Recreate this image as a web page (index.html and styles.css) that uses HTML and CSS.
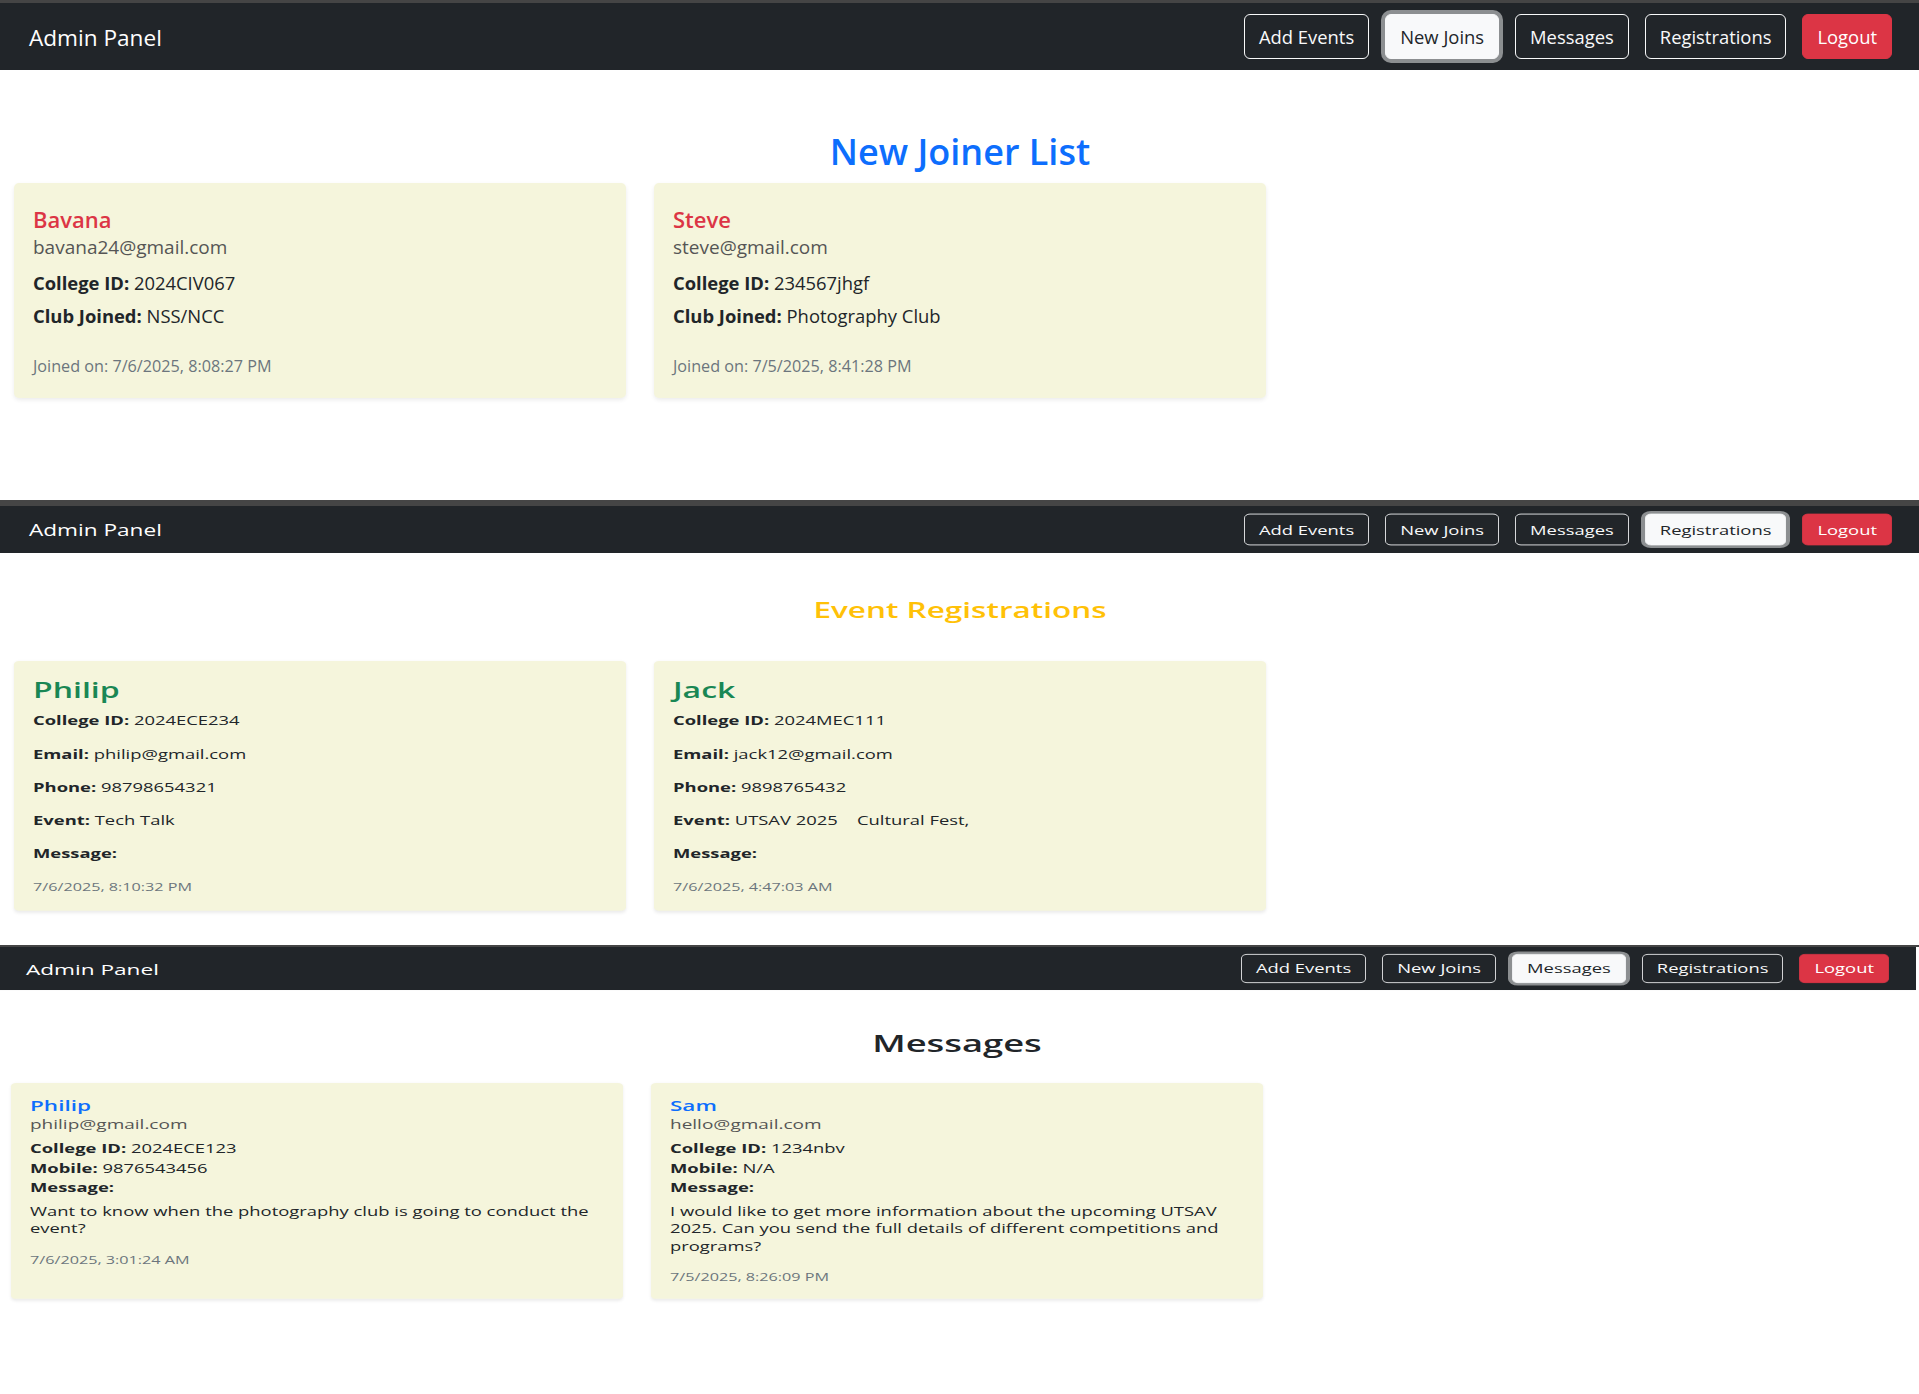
FILE: index.html
```html
<!DOCTYPE html>
<html lang="en">
<head>
<meta charset="utf-8">
<title>Admin Panel</title>
<link rel="stylesheet" href="styles.css">
</head>
<body>

<section class="shot shot-joins">
  <div class="screen">
    <nav class="navbar">
      <span class="brand">Admin Panel</span>
      <div class="nav-actions">
        <button class="btn btn-outline">Add Events</button>
        <button class="btn btn-outline active">New Joins</button>
        <button class="btn btn-outline">Messages</button>
        <button class="btn btn-outline">Registrations</button>
        <button class="btn btn-danger">Logout</button>
      </div>
    </nav>
    <main class="content">
      <h2 class="page-title">New Joiner List</h2>
      <div class="card-grid">
        <article class="card">
          <h4 class="name">Bavana</h4>
          <p class="email">bavana24@gmail.com</p>
          <p class="row"><strong>College ID:</strong> 2024CIV067</p>
          <p class="row"><strong>Club Joined:</strong> NSS/NCC</p>
          <p class="meta">Joined on: 7/6/2025, 8:08:27 PM</p>
        </article>
        <article class="card">
          <h4 class="name">Steve</h4>
          <p class="email">steve@gmail.com</p>
          <p class="row"><strong>College ID:</strong> 234567jhgf</p>
          <p class="row"><strong>Club Joined:</strong> Photography Club</p>
          <p class="meta">Joined on: 7/5/2025, 8:41:28 PM</p>
        </article>
      </div>
    </main>
  </div>
</section>

<section class="shot shot-reg">
  <div class="screen">
    <nav class="navbar">
      <span class="brand">Admin Panel</span>
      <div class="nav-actions">
        <button class="btn btn-outline">Add Events</button>
        <button class="btn btn-outline">New Joins</button>
        <button class="btn btn-outline">Messages</button>
        <button class="btn btn-outline active">Registrations</button>
        <button class="btn btn-danger">Logout</button>
      </div>
    </nav>
    <main class="content">
      <h2 class="page-title">Event Registrations</h2>
      <div class="card-grid">
        <article class="card">
          <h3 class="name">Philip</h3>
          <p class="row"><strong>College ID:</strong> 2024ECE234</p>
          <p class="row"><strong>Email:</strong> philip@gmail.com</p>
          <p class="row"><strong>Phone:</strong> 98798654321</p>
          <p class="row"><strong>Event:</strong> Tech Talk</p>
          <p class="row row-last"><strong>Message:</strong></p>
          <p class="meta">7/6/2025, 8:10:32 PM</p>
        </article>
        <article class="card">
          <h3 class="name">Jack</h3>
          <p class="row"><strong>College ID:</strong> 2024MEC111</p>
          <p class="row"><strong>Email:</strong> jack12@gmail.com</p>
          <p class="row"><strong>Phone:</strong> 9898765432</p>
          <p class="row"><strong>Event:</strong> UTSAV 2025&nbsp;&nbsp;&nbsp; Cultural Fest,</p>
          <p class="row row-last"><strong>Message:</strong></p>
          <p class="meta">7/6/2025, 4:47:03 AM</p>
        </article>
      </div>
    </main>
  </div>
</section>

<section class="shot shot-msg">
  <div class="screen">
    <nav class="navbar">
      <span class="brand">Admin Panel</span>
      <div class="nav-actions">
        <button class="btn btn-outline">Add Events</button>
        <button class="btn btn-outline">New Joins</button>
        <button class="btn btn-outline active">Messages</button>
        <button class="btn btn-outline">Registrations</button>
        <button class="btn btn-danger">Logout</button>
      </div>
    </nav>
    <main class="content">
      <h2 class="page-title">Messages</h2>
      <div class="card-grid">
        <article class="card">
          <h5 class="name">Philip</h5>
          <p class="email">philip@gmail.com</p>
          <p class="row row-college"><strong>College ID:</strong> 2024ECE123</p>
          <p class="row row-mobile"><strong>Mobile:</strong> 9876543456</p>
          <p class="row row-label"><strong>Message:</strong></p>
          <p class="message">Want to know when the photography club is going to conduct the event?</p>
          <p class="meta">7/6/2025, 3:01:24 AM</p>
        </article>
        <article class="card">
          <h5 class="name">Sam</h5>
          <p class="email">hello@gmail.com</p>
          <p class="row row-college"><strong>College ID:</strong> 1234nbv</p>
          <p class="row row-mobile"><strong>Mobile:</strong> N/A</p>
          <p class="row row-label"><strong>Message:</strong></p>
          <p class="message">I would like to get more information about the upcoming UTSAV 2025. Can you send the full details of different competitions and programs?</p>
          <p class="meta">7/5/2025, 8:26:09 PM</p>
        </article>
      </div>
    </main>
  </div>
</section>

</body>
</html>
```

FILE: styles.css
```css
* {
  box-sizing: border-box;
}

body {
  margin: 0;
  background: #ffffff;
  color: #212529;
  font-family: "Open Sans", "Noto Sans", sans-serif;
}

h2, h3, h4, h5, p {
  margin: 0;
}

/* each captured screen */
.shot {
  height: 500px;
  overflow: hidden;
  border-top: 3px solid #454545;
  background: #ffffff;
}

.shot-reg {
  height: 445px;
  border-top-width: 6px;
}

.shot-msg {
  height: 449px;
  border-top-width: 2px;
}

.screen {
  width: 1919px;
  transform-origin: 0 0;
}

.shot-reg .screen {
  transform: scaleY(0.7015);
}

.shot-msg .screen {
  width: 1916px;
  transform: scaleY(0.642);
}

/* navbar */
.navbar {
  height: 67px;
  background: #212529;
  display: flex;
  align-items: center;
  justify-content: space-between;
  padding: 0 27px 0 29px;
}

.shot-msg .navbar {
  padding-left: 26px;
}

.brand {
  color: #ffffff;
  font-size: 22.6px;
  line-height: 30px;
  padding-top: 3px;
}

.nav-actions {
  display: flex;
  gap: 16px;
}

.btn {
  font-family: inherit;
  font-size: 18.4px;
  line-height: 27.6px;
  height: 45px;
  padding: 7.7px 14px;
  border: 1px solid #f8f9fa;
  border-radius: 6px;
  background: transparent;
  color: #f8f9fa;
  white-space: nowrap;
}

.btn.active {
  background: #f8f9fa;
  color: #212529;
  box-shadow: 0 0 0 4px rgba(248, 249, 250, 0.5);
}

.btn-danger {
  background: #dc3545;
  border-color: #dc3545;
  color: #ffffff;
}

/* content */
.content {
  padding: 60.4px 13px 0 14px;
}

.shot-reg .content {
  padding-top: 62.2px;
}

.shot-msg .content {
  padding: 62.2px 13px 0 11px;
}

.page-title {
  text-align: center;
  font-weight: 600;
  font-size: 36px;
  line-height: 43.2px;
  color: #0d6efd;
  margin-bottom: 9.4px;
}

.shot-reg .page-title {
  font-size: 31.5px;
  line-height: 37.8px;
  color: #ffc107;
  margin-bottom: 54px;
}

.shot-msg .page-title {
  font-size: 36.3px;
  line-height: 43.56px;
  color: #212529;
  margin-bottom: 39.05px;
}

.card-grid {
  display: grid;
  grid-template-columns: repeat(3, 1fr);
  column-gap: 28px;
}

.card {
  display: flex;
  flex-direction: column;
  background: #f5f5dc;
  border-radius: 5px;
  box-shadow: 0 2px 4px rgba(0, 0, 0, 0.08);
  padding: 22px 19px 19.3px;
}

.name {
  font-weight: 600;
  font-size: 22px;
  line-height: 28px;
  color: #dc3545;
  margin-bottom: 1.3px;
}

.email {
  font-size: 19px;
  line-height: 27.6px;
  color: #555555;
  margin-bottom: 7px;
}

.row {
  font-size: 18.4px;
  line-height: 27.6px;
  margin-bottom: 5.7px;
}

.row strong {
  font-weight: 700;
}

.meta {
  font-size: 16.2px;
  line-height: 24.3px;
  color: #6c757d;
  margin-top: 18.7px;
}

/* registrations screen */
.shot-reg .card {
  padding: 21.5px 19px 21.9px;
}

.shot-reg .name {
  font-size: 32px;
  line-height: 38.4px;
  color: #198754;
  margin-bottom: 10.4px;
}

.shot-reg .row {
  margin-bottom: 19.9px;
}

.shot-reg .row-last {
  margin-bottom: 22.2px;
}

.shot-reg .meta {
  margin-top: 0;
}

/* messages screen */
.shot-msg .card {
  padding: 23.2px 19px 20.7px;
}

.shot-msg .name {
  font-size: 22.5px;
  line-height: 26.4px;
  color: #0d6efd;
  margin-bottom: 1.6px;
}

.shot-msg .email {
  margin-bottom: 9.2px;
}

.shot-msg .row-college {
  margin-bottom: 3.5px;
}

.shot-msg .row-mobile {
  margin-bottom: 2px;
}

.shot-msg .row-label {
  margin-bottom: 9.8px;
}

.message {
  font-size: 18.4px;
  line-height: 27.6px;
  margin-bottom: 22.5px;
}

.shot-msg .meta {
  margin-top: 0;
}
```
